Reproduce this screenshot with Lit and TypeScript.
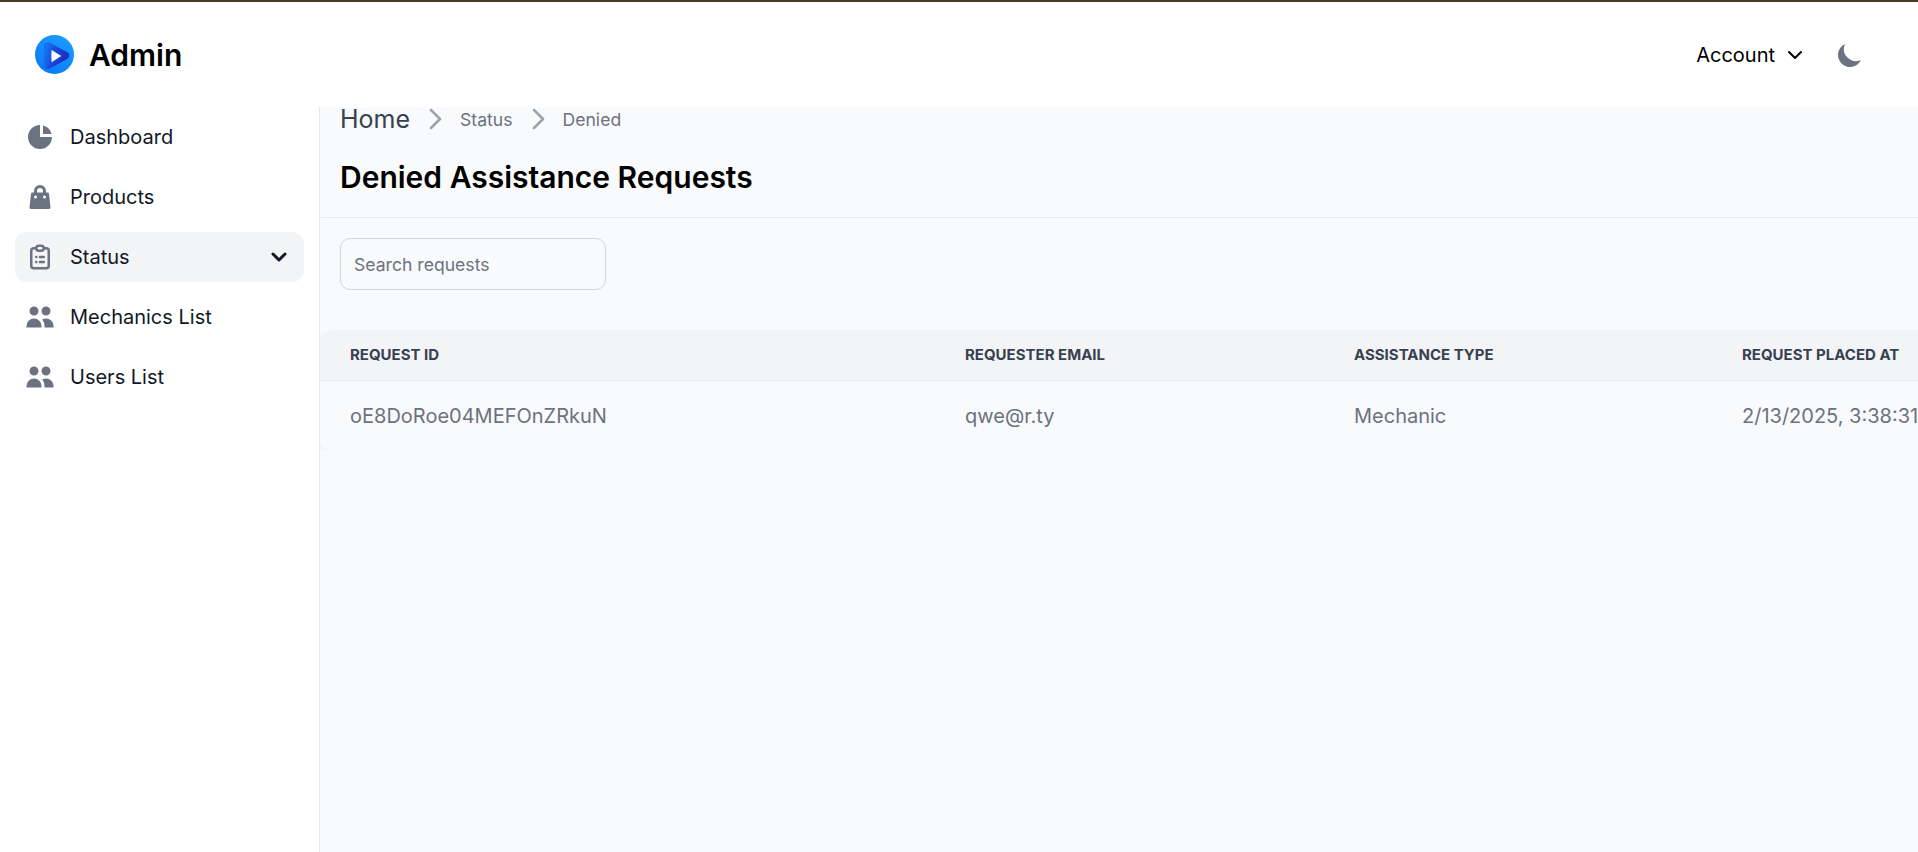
import { LitElement, html, css, svg } from 'lit';
import { customElement } from 'lit/decorators.js';

const navIcons = {
  pie: svg`<path fill="currentColor" d="M2 10a8 8 0 018-8v8h8a8 8 0 11-16 0z"/><path fill="currentColor" d="M12 2.252A8.014 8.014 0 0117.748 8H12V2.252z"/>`,
  bag: svg`<path fill="currentColor" fill-rule="evenodd" clip-rule="evenodd" d="M10 2a4 4 0 00-4 4v1H5a1 1 0 00-.994.89l-1 9A1 1 0 004 18h12a1 1 0 00.994-1.11l-1-9A1 1 0 0015 7h-1V6a4 4 0 00-4-4zm2 5V6a2 2 0 10-4 0v1h4zm-6 3a1 1 0 112 0 1 1 0 01-2 0zm7-1a1 1 0 100 2 1 1 0 000-2z"/>`,
  users: svg`<path fill="currentColor" d="M9 6a3 3 0 11-6 0 3 3 0 016 0zM17 6a3 3 0 11-6 0 3 3 0 016 0zM12.93 17c.046-.327.07-.66.07-1a6.97 6.97 0 00-1.5-4.33A5 5 0 0119 16v1h-6.07zM6 11a5 5 0 015 5v1H1v-1a5 5 0 015-5z"/>`,
};

const clipboard = html`<svg class="nav-icon" viewBox="0 0 24 24" fill="none" stroke="currentColor" stroke-width="2" stroke-linecap="round" stroke-linejoin="round"><path d="M9 5H7a2 2 0 00-2 2v12a2 2 0 002 2h10a2 2 0 002-2V7a2 2 0 00-2-2h-2M9 5a2 2 0 002 2h2a2 2 0 002-2M9 5a2 2 0 012-2h2a2 2 0 012 2m-3 7h3m-3 4h3m-6-4h.01M9 16h.01"/></svg>`;

const chevronRight = html`<svg class="crumb-sep" viewBox="0 0 24 24" fill="none" stroke="currentColor" stroke-width="2.600" stroke-linecap="round" stroke-linejoin="round"><path d="M8 3l9 9-9 9"/></svg>`;

const logo = html`<svg class="logo" viewBox="0 0 40 40">
  <defs>
    <linearGradient id="logo-bg" x1="0.8" y1="0" x2="0.2" y2="1">
      <stop offset="0" stop-color="#1a9dff"/>
      <stop offset="1" stop-color="#0a78f8"/>
    </linearGradient>
    <linearGradient id="logo-ring" x1="0" y1="0" x2="1" y2="0.3">
      <stop offset="0" stop-color="#1470ee"/>
      <stop offset="0.45" stop-color="#1a48dc"/>
      <stop offset="1" stop-color="#1c32c4"/>
    </linearGradient>
  </defs>
  <circle cx="20" cy="20" r="20" fill="url(#logo-bg)"/>
  <path fill="#fff" stroke="url(#logo-ring)" stroke-width="8" stroke-linejoin="round" d="M13 11.500l18 9.500-18 10z"/>
  <path fill="#fff" d="M17 15.500l10 6-10 6.500z"/>
</svg>`;

@customElement('app-root')
export class AppRoot extends LitElement {
  static styles = css`
    :host {
      display: block;
      height: 852px;
      overflow: hidden;
      background: #fff;
      font-family: Inter, 'Noto Sans', sans-serif;
      border-top: 2px solid #4a3a26;
      box-sizing: border-box;
    }

    .navbar {
      height: 105px;
      display: flex;
      align-items: center;
      justify-content: space-between;
      padding: 0 53px 0 35px;
      box-sizing: border-box;
    }

    .brand {
      display: flex;
      align-items: center;
      gap: 15px;
      font-size: 30px;
      font-weight: 600;
      color: #000;
    }

    .logo {
      width: 39px;
      height: 39px;
    }

    .nav-right {
      display: flex;
      align-items: center;
      gap: 28px;
    }

    .account {
      display: flex;
      align-items: center;
      gap: 8px;
      font-size: 20px;
      color: #000;
    }

    .account svg {
      width: 24px;
      height: 24px;
    }

    .moon {
      width: 30px;
      height: 30px;
      color: #6b7280;
    }

    .body {
      display: flex;
      height: 745px;
    }

    .sidebar {
      width: 320px;
      flex: none;
      box-sizing: border-box;
      border-right: 1px solid #e5e7eb;
      padding: 5px 15px 0;
      display: flex;
      flex-direction: column;
      gap: 10px;
    }

    .nav-item {
      height: 50px;
      border-radius: 12px;
      display: flex;
      align-items: center;
      gap: 15px;
      padding: 0 13px 0 10px;
      font-size: 20px;
      color: #111827;
    }

    .nav-item.active {
      background: #f3f4f6;
    }

    .nav-icon {
      width: 30px;
      height: 30px;
      flex: none;
      color: #6b7280;
    }

    .caret {
      width: 24px;
      height: 24px;
      margin-left: auto;
      color: #111827;
    }

    .main {
      flex: 1;
      min-width: 0;
      overflow: hidden;
      background: #f9fafb;
    }

    .head {
      padding: 0 20px;
      height: 111px;
      box-sizing: border-box;
      border-bottom: 1px solid #e5e7eb;
    }

    .crumbs {
      display: flex;
      align-items: center;
      height: 24px;
      font-size: 17.6px;
      color: #6b7280;
    }

    .crumbs .home {
      font-size: 25px;
      font-weight: 400;
      color: #374151;
    }

    .crumb-sep {
      width: 24px;
      height: 24px;
      margin: 0 13px;
      color: #9ca3af;
    }

    h1 {
      margin: 28px 0 0;
      font-size: 30px;
      line-height: 36px;
      font-weight: 600;
      color: #000;
    }

    .search {
      margin: 20px 0 40px 20px;
      width: 266px;
      height: 52px;
      box-sizing: border-box;
      border: 1px solid #d1d5db;
      border-radius: 10px;
      padding: 0 13px;
      font-size: 17.6px;
      line-height: 52px;
      color: #6b7280;
    }

    .table {
      width: 1700px;
      border-radius: 12px 12px 0 0;
      overflow: hidden;
      background: #f3f4f6;
    }

    .row {
      display: grid;
      grid-template-columns: 615px 389px 388px 1fr;
      padding-left: 30px;
      align-items: center;
    }

    .row.th {
      height: 51px;
      padding-bottom: 1px;
      border-bottom: 1px solid #e5e7eb;
      box-sizing: border-box;
      font-size: 15px;
      font-weight: 700;
      color: #374151;
      text-transform: uppercase;
    }

    .row.td {
      height: 69px;
      font-size: 20px;
      color: #6b7280;
      white-space: nowrap;
      background: #f9fafb;
      border-bottom-left-radius: 10px;
    }
  `;

  render() {
    return html`
      <div class="navbar">
        <div class="brand">${logo}<span>Admin</span></div>
        <div class="nav-right">
          <div class="account">
            Account
            <svg viewBox="0 0 24 24" fill="none" stroke="currentColor" stroke-width="2" stroke-linecap="round" stroke-linejoin="round"><path d="M6 9l6 6 6-6"/></svg>
          </div>
          <svg class="moon" viewBox="0 0 20 20"><path fill="currentColor" d="M17.293 13.293A8 8 0 016.707 2.707a8.001 8.001 0 1010.586 10.586z"/></svg>
        </div>
      </div>
      <div class="body">
        <nav class="sidebar">
          <div class="nav-item"><svg class="nav-icon" viewBox="0 0 20 20">${navIcons.pie}</svg>Dashboard</div>
          <div class="nav-item"><svg class="nav-icon" viewBox="0 0 20 20">${navIcons.bag}</svg>Products</div>
          <div class="nav-item active">
            ${clipboard}Status
            <svg class="caret" viewBox="0 0 24 24" fill="none" stroke="currentColor" stroke-width="3" stroke-linecap="round" stroke-linejoin="round"><path d="M6 9l6 6 6-6"/></svg>
          </div>
          <div class="nav-item"><svg class="nav-icon" viewBox="0 0 20 20">${navIcons.users}</svg>Mechanics List</div>
          <div class="nav-item"><svg class="nav-icon" viewBox="0 0 20 20">${navIcons.users}</svg>Users List</div>
        </nav>
        <main class="main">
          <div class="head">
            <div class="crumbs">
              <span class="home">Home</span>${chevronRight}<span>Status</span>${chevronRight}<span>Denied</span>
            </div>
            <h1>Denied Assistance Requests</h1>
          </div>
          <div class="search">Search requests</div>
          <div class="table">
            <div class="row th">
              <div>Request ID</div>
              <div>Requester Email</div>
              <div>Assistance Type</div>
              <div>Request Placed At</div>
            </div>
            <div class="row td">
              <div>oE8DoRoe04MEFOnZRkuN</div>
              <div>qwe@r.ty</div>
              <div>Mechanic</div>
              <div>2/13/2025, 3:38:31 PM</div>
            </div>
          </div>
        </main>
      </div>
    `;
  }
}
